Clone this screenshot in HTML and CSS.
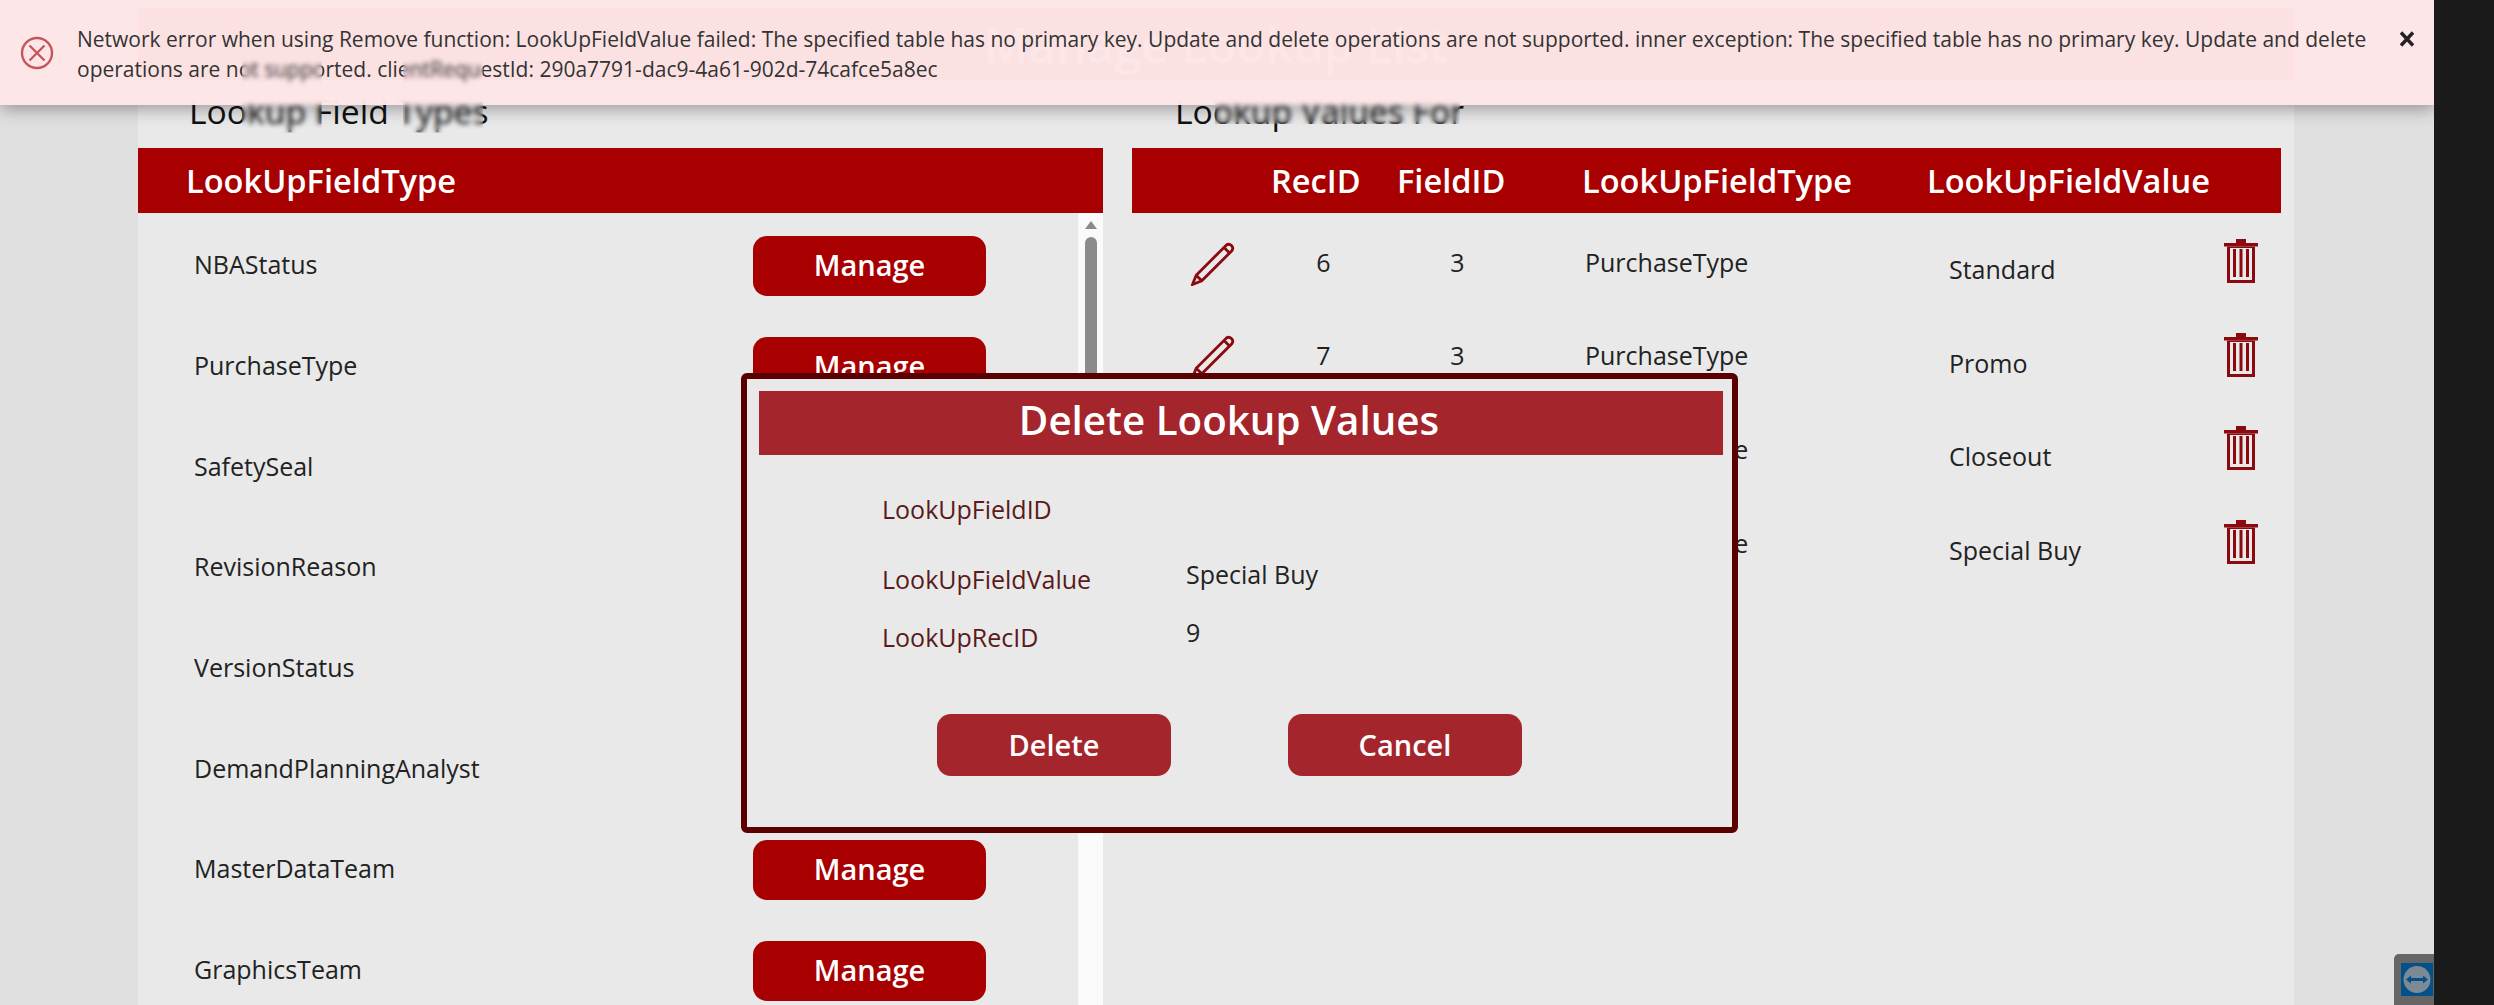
FILE: index.html
```html
<!DOCTYPE html>
<html lang="en">
<head>
<meta charset="UTF-8" />
<title>Manage Lookup List</title>
<link rel="stylesheet" href="styles.css">
</head>
<body>

<div class="page">
  <div class="panel">
    <div class="panel-bar"><span class="panel-title">Manage Lookup List</span></div>

    <div class="columns">
      <!-- Lookup field types -->
      <section class="col-left">
        <h2 class="col-title">Lookup Field Types</h2>
        <div class="table-head head-left">LookUpFieldType</div>
        <div class="list-wrap">
          <div class="type-list">
            <div class="type-row"><span>NBAStatus</span><button class="btn-manage">Manage</button></div>
            <div class="type-row"><span>PurchaseType</span><button class="btn-manage">Manage</button></div>
            <div class="type-row"><span>SafetySeal</span><button class="btn-manage">Manage</button></div>
            <div class="type-row"><span>RevisionReason</span><button class="btn-manage">Manage</button></div>
            <div class="type-row"><span>VersionStatus</span><button class="btn-manage">Manage</button></div>
            <div class="type-row"><span>DemandPlanningAnalyst</span><button class="btn-manage">Manage</button></div>
            <div class="type-row"><span>MasterDataTeam</span><button class="btn-manage">Manage</button></div>
            <div class="type-row"><span>GraphicsTeam</span><button class="btn-manage">Manage</button></div>
          </div>
          <div class="scrollbar">
            <svg class="scroll-arrow" viewBox="0 0 12 8"><path d="M6 0 12 8H0z" fill="#8a8a8a"/></svg>
            <div class="scroll-thumb"></div>
          </div>
        </div>
      </section>

      <!-- Lookup values -->
      <section class="col-right">
        <h2 class="col-title">Lookup Values For</h2>
        <div class="table-head head-right">
          <span>RecID</span><span>FieldID</span><span>LookUpFieldType</span><span>LookUpFieldValue</span>
        </div>
        <div class="value-row">
          <svg class="icon-pencil" viewBox="0 0 44 44"><use href="#pencil"/></svg>
          <span class="num">6</span><span class="num">3</span><span class="type">PurchaseType</span><span class="val">Standard</span>
          <svg class="icon-trash" viewBox="0 0 34 44"><use href="#trash"/></svg>
        </div>
        <div class="value-row">
          <svg class="icon-pencil" viewBox="0 0 44 44"><use href="#pencil"/></svg>
          <span class="num">7</span><span class="num">3</span><span class="type">PurchaseType</span><span class="val">Promo</span>
          <svg class="icon-trash" viewBox="0 0 34 44"><use href="#trash"/></svg>
        </div>
        <div class="value-row">
          <svg class="icon-pencil" viewBox="0 0 44 44"><use href="#pencil"/></svg>
          <span class="num">8</span><span class="num">3</span><span class="type">PurchaseType</span><span class="val">Closeout</span>
          <svg class="icon-trash" viewBox="0 0 34 44"><use href="#trash"/></svg>
        </div>
        <div class="value-row">
          <svg class="icon-pencil" viewBox="0 0 44 44"><use href="#pencil"/></svg>
          <span class="num">9</span><span class="num">3</span><span class="type">PurchaseType</span><span class="val">Special Buy</span>
          <svg class="icon-trash" viewBox="0 0 34 44"><use href="#trash"/></svg>
        </div>
      </section>
    </div>
  </div>

  <!-- Delete popup -->
  <div class="dialog">
    <div class="dialog-head">Delete Lookup Values</div>
    <div class="dialog-fields">
      <span class="lbl">LookUpFieldID</span><span class="field-val"></span>
      <span class="lbl">LookUpFieldValue</span><span class="field-val">Special Buy</span>
      <span class="lbl">LookUpRecID</span><span class="field-val">9</span>
    </div>
    <div class="dialog-actions">
      <button class="btn-dialog">Delete</button>
      <button class="btn-dialog">Cancel</button>
    </div>
  </div>

  <!-- Error notification -->
  <div class="notify">
    <svg class="notify-icon" viewBox="0 0 34 34">
      <circle cx="17" cy="17" r="15" fill="none" stroke="#c8555e" stroke-width="2.400"/>
      <path d="M9.500 9.500 24.500 24.500M24.500 9.500 9.500 24.500" stroke="#c8555e" stroke-width="2.400" fill="none"/>
    </svg>
    <p class="notify-text">Network error when using Remove function: LookUpFieldValue failed: The specified table has no primary key. Update and delete operations are not supported. inner exception: The specified table has no primary key. Update and delete<br>operations are not supported. clientRequestId: 290a7791-dac9-4a61-902d-74cafce5a8ec</p>
    <svg class="notify-close" viewBox="0 0 16 16"><path d="M2 1.500 14 14.500M14 1.500 2 14.500" stroke="#222" stroke-width="3.400" fill="none"/></svg>
  </div>

  <!-- Blurred-out patches of the capture -->
  <div class="patch patch-a"></div>
  <div class="patch patch-b"></div>
  <div class="patch patch-c"></div>

  <!-- Remote session widget -->
  <div class="tv-tab">
    <svg class="tv-logo" viewBox="0 0 32 33">
      <rect width="32" height="33" fill="#03508a"/>
      <circle cx="16" cy="16.500" r="13.500" fill="#7d8a94"/>
      <path d="M5 16.500 10 12.500V15H22V12.500L27 16.500 22 20.500V18H10V20.500Z" fill="#03508a"/>
    </svg>
  </div>
</div>

<div class="black-strip"></div>

<svg class="defs" width="0" height="0">
  <defs>
    <g id="pencil" fill="none" stroke="#8b0a0f" stroke-width="2.800">
      <path d="M1.500 42.500 5.200 33.200 35.200 3.200A4 4 0 0 1 40.800 8.800L10.800 38.800Z"/>
      <path d="M5.200 33.200 10.800 38.800M33 5.500 38.500 11"/>
    </g>
    <g id="trash" fill="#8b0a0f">
      <rect x="12" y="0" width="10" height="4"/>
      <rect x="0" y="4" width="34" height="3.500"/>
      <path d="M3 7.500H31V44H3ZM6 9V41H28V9Z" fill-rule="evenodd"/>
      <rect x="9" y="10" width="3" height="28"/>
      <rect x="15.500" y="10" width="3" height="28"/>
      <rect x="22" y="10" width="3" height="28"/>
    </g>
  </defs>
</svg>

</body>
</html>
```

FILE: styles.css
```css
* { box-sizing: border-box; }
html, body { margin: 0; height: 100%; overflow: hidden; }
body { display: flex; font-family: "Open Sans", sans-serif; color: #222; background: #1a1a1a; }
button { font-family: inherit; border: none; color: #fff; font-weight: 600; }
.defs { position: absolute; }

.page { position: relative; width: 2434px; height: 1005px; overflow: hidden; background: #e0e0e0; }
.black-strip { width: 60px; background: #1a1a1a; }

.panel { width: 2156px; height: 1005px; margin-left: 138px; background: #e9e9e9; padding-top: 8px; }
.panel-bar { height: 72px; background: #a80000; display: flex; align-items: center; justify-content: center; }
.panel-title { color: #fff; font-size: 48px; font-weight: 600; }

.columns { display: flex; gap: 29px; }
.col-left { width: 965px; }
.col-right { width: 1149px; }
.col-title { margin: 0; height: 68px; padding: 11px 0 0 51px; font-size: 33.700px; line-height: 40px; font-weight: 400; color: #111; }
.col-right .col-title { padding-left: 43px; }

.table-head { height: 65px; background: #a80000; color: #fff; font-size: 32.600px; font-weight: 600; line-height: 65px; }
.head-left { padding-left: 48px; }
.head-right { display: grid; grid-template-columns: 126px 185px 345px auto; padding-left: 139px; }

.list-wrap { display: flex; height: 792px; padding-top: 3px; }
.type-list { width: 940px; }
.type-row { display: grid; grid-template-columns: 559px 233px; align-items: center; height: 100.700px; padding-left: 56px; font-size: 25px; }
.type-row span { margin-top: -4px; }
.btn-manage { height: 60px; border-radius: 14px; background: #a80000; font-size: 29px; padding-bottom: 4px; }

.scrollbar { width: 25px; margin-top: -3px; background: #fafafa; display: flex; flex-direction: column; align-items: center; padding-top: 8px; }
.scroll-arrow { width: 12px; height: 8px; }
.scroll-thumb { width: 12px; height: 560px; margin-top: 8px; background: #8b8b8b; border-radius: 6px; }

.value-row { display: grid; grid-template-columns: 130px 123px 145px 419px 275px 34px; align-items: center; height: 93.600px; font-size: 25px; }
.table-head + .value-row { margin-top: 3px; }
.icon-pencil { width: 44px; height: 44px; margin-left: 59px; margin-top: 2px; }
.icon-trash { width: 34px; height: 44px; margin-top: -3px; }
.num { text-align: center; margin-top: -2px; }
.type { padding-left: 55px; margin-top: -2px; }
.val { padding-top: 13px; }

.dialog { position: absolute; left: 741px; top: 373px; width: 997px; height: 460px; background: #e9e9e9; border: 6px solid #5a0000; border-radius: 6px; padding: 12px 9px 0 12px; }
.dialog-head { height: 64px; padding-right: 24px; background: #a4252c; color: #fff; font-size: 40.300px; font-weight: 600; line-height: 58px; text-align: center; }
.dialog-fields { display: grid; grid-template-columns: 304px auto; grid-template-rows: 70px 58px 60px; padding: 37px 0 0 123px; font-size: 25px; }
.lbl { color: #5a1a1a; }
.field-val { margin-top: -5px; }
.dialog-actions { display: flex; gap: 117px; padding: 34px 0 0 178px; }
.btn-dialog { width: 234px; height: 62px; border-radius: 14px; background: #a4252c; font-size: 29px; padding-bottom: 2px; }

.notify { position: absolute; left: 0; top: 0; width: 2434px; height: 105px; display: flex; align-items: flex-start; background: rgba(253, 229, 231, 0.98); box-shadow: 0 4px 16px rgba(0, 0, 0, 0.35); }
.notify-icon { width: 34px; height: 34px; margin: 36px 0 0 20px; flex: none; }
.notify-text { margin: 24px 0 0 23px; width: 2310px; font-size: 21px; line-height: 30px; color: #333; flex: none; }
.notify-close { position: absolute; left: 2399px; top: 31px; width: 16px; height: 16px; }

.patch { position: absolute; backdrop-filter: blur(2.500px); }
.patch-a { left: 242px; top: 53px; width: 80px; height: 80px; }
.patch-b { left: 403px; top: 53px; width: 80px; height: 80px; }
.patch-c { left: 1215px; top: 80px; width: 245px; height: 44px; }

.tv-tab { position: absolute; left: 2394px; top: 954px; width: 40px; height: 51px; background: #666; border-top-left-radius: 5px; padding: 9px 0 0 7px; }
.tv-logo { display: block; width: 32px; height: 33px; }
```
